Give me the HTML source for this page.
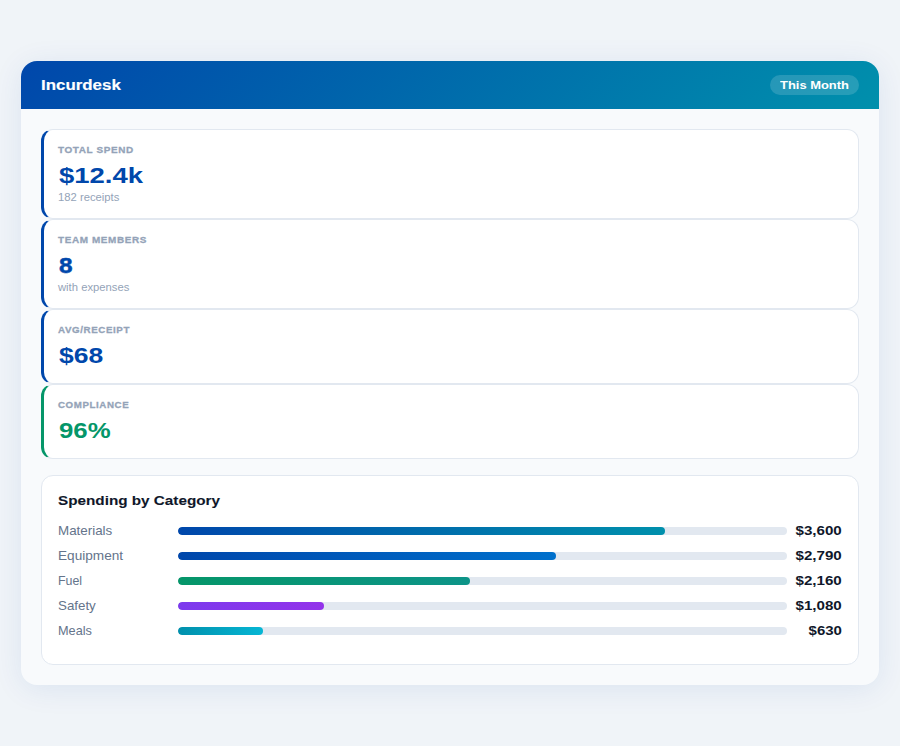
<!DOCTYPE html>
<html><head><meta charset="utf-8">
<style>
*{box-sizing:border-box;margin:0;padding:0}
html,body{width:900px;height:746px;overflow:hidden}
body{background:#f0f4f8;font-family:"Liberation Sans",sans-serif;position:relative}
.t{display:inline-block;white-space:nowrap;transform-origin:0 50%}
.lbl .t{-webkit-text-stroke:0.3px currentColor}
.card{position:absolute;left:21px;top:61px;width:858px;height:624px;border-radius:16px;background:#f8fafc;overflow:hidden;box-shadow:0 4px 30px rgba(0,71,171,0.09)}
.hdr{height:48px;background:linear-gradient(135deg,#0047ab 0%,#0090ac 100%);display:flex;align-items:center;justify-content:space-between;padding:0 20px}
.brand{color:#fff;font-weight:bold;font-size:14.5px;height:16px;line-height:16px}
.brand .t{transform:scaleX(1.165);-webkit-text-stroke:0.15px #fff}
.pill{color:#fff;font-weight:bold;font-size:11.25px;background:rgba(255,255,255,0.15);border-radius:12px;padding:0 10px;width:89px;height:20px;line-height:20px}
.pill .t{transform:scaleX(1.15)}
.body{padding:20px}
.stat{background:#fff;border:1px solid #e2e8f0;border-left:3px solid #0047ab;border-radius:12px;padding:15px 14px;position:relative}
.stat.g{border-left-color:#059669}
.lbl{font-size:9.75px;font-weight:bold;letter-spacing:0.6px;color:#94a3b8;height:10px;line-height:10px}
.lbl .t{transform:scaleX(1.02)}
.val{font-size:22.5px;font-weight:bold;color:#0047ab;margin-top:8px;height:25px;line-height:25px}
.stat.g .val{color:#059669}
.val .t{margin-left:1px}
.sub{font-size:11.25px;color:#94a3b8;margin-top:4px;height:11px;line-height:11px}
.chart{margin-top:16px;background:#fff;border:1px solid #e2e8f0;border-radius:12px;padding:17px 16px 20px}
.ttl{font-size:13px;font-weight:bold;color:#0f172a;-webkit-text-stroke:0.1px #0f172a;margin-bottom:11px;height:15px;line-height:15px}
.ttl .t{transform:scaleX(1.174)}
.row{display:flex;align-items:center;height:24px;margin-bottom:1px}
.rl{width:120px;font-size:13px;color:#64748b;line-height:24px;height:24px}
.tr{flex:1;height:8px;background:#e2e8f0;border-radius:4px;overflow:hidden}
.fl{height:8px;border-radius:4px}
.rv{width:55px;text-align:right;font-size:13px;font-weight:bold;color:#0f172a;line-height:24px;height:24px}
.rv .t{transform-origin:100% 50%;transform:scaleX(1.163)}
</style></head><body>
<div class="card">
  <div class="hdr"><div class="brand"><span class="t">Incurdesk</span></div><div class="pill"><span class="t">This Month</span></div></div>
  <div class="body">
    <div class="stat"><div class="lbl"><span class="t" style="transform:scaleX(1.02)">TOTAL SPEND</span></div><div class="val"><span class="t" style="transform:scaleX(1.221)">$12.4k</span></div><div class="sub"><span class="t">182 receipts</span></div></div>
    <div class="stat"><div class="lbl"><span class="t" style="transform:scaleX(1.019)">TEAM MEMBERS</span></div><div class="val"><span class="t" style="transform:scaleX(1.083);-webkit-text-stroke:0.5px currentColor">8</span></div><div class="sub"><span class="t">with expenses</span></div></div>
    <div class="stat"><div class="lbl"><span class="t" style="transform:scaleX(1.0)">AVG/RECEIPT</span></div><div class="val"><span class="t" style="transform:scaleX(1.178)">$68</span></div></div>
    <div class="stat g"><div class="lbl"><span class="t" style="transform:scaleX(0.996)">COMPLIANCE</span></div><div class="val"><span class="t" style="transform:scaleX(1.146)">96%</span></div></div>
    <div class="chart">
      <div class="ttl"><span class="t">Spending by Category</span></div>
      <div class="row"><div class="rl"><span class="t" style="transform:scaleX(1.029)">Materials</span></div><div class="tr"><div class="fl" style="width:80%;background:linear-gradient(90deg,#0047ab,#0090ac)"></div></div><div class="rv"><span class="t">$3,600</span></div></div>
      <div class="row"><div class="rl"><span class="t" style="transform:scaleX(1.047)">Equipment</span></div><div class="tr"><div class="fl" style="width:62%;background:linear-gradient(90deg,#0047ab,#0070cc)"></div></div><div class="rv"><span class="t">$2,790</span></div></div>
      <div class="row"><div class="rl"><span class="t" style="transform:scaleX(0.952)">Fuel</span></div><div class="tr"><div class="fl" style="width:48%;background:linear-gradient(90deg,#059669,#0d9488)"></div></div><div class="rv"><span class="t">$2,160</span></div></div>
      <div class="row"><div class="rl"><span class="t" style="transform:scaleX(1.025)">Safety</span></div><div class="tr"><div class="fl" style="width:24%;background:linear-gradient(90deg,#7c3aed,#9333ea)"></div></div><div class="rv"><span class="t">$1,080</span></div></div>
      <div class="row"><div class="rl"><span class="t" style="transform:scaleX(0.978)">Meals</span></div><div class="tr"><div class="fl" style="width:14%;background:linear-gradient(90deg,#0090ac,#06b6d4)"></div></div><div class="rv"><span class="t" style="transform:scaleX(1.152)">$630</span></div></div>
    </div>
  </div>
</div>
</body></html>
